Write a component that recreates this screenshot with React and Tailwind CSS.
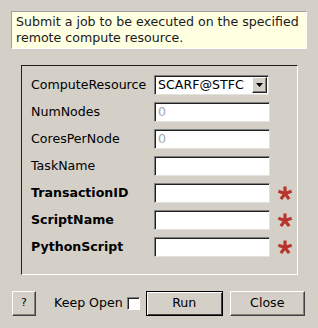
const fields = [
  { label: 'NumNodes', value: '0', disabled: true },
  { label: 'CoresPerNode', value: '0', disabled: true },
  { label: 'TaskName', value: '' },
  { label: 'TransactionID', value: '', required: true },
  { label: 'ScriptName', value: '', required: true },
  { label: 'PythonScript', value: '', required: true },
];

function Asterisk() {
  // five-armed red mark for mandatory fields
  const arms = [-90, -18, 54, 126, 198];
  return (
    <svg width="16" height="16" viewBox="0 0 16 16" className="ml-[7px]">
      {arms.map((a) => {
        const r = (a * Math.PI) / 180;
        return (
          <line
            key={a}
            x1="8"
            y1="8.5"
            x2={8 + Math.cos(r) * 7}
            y2={8.5 + Math.sin(r) * 7}
            stroke="#b8352b"
            strokeWidth="3.2"
            strokeLinecap="butt"
          />
        );
      })}
    </svg>
  );
}

function Field({ value, disabled }) {
  return (
    <div className="w-[116px] h-[20px] bg-white border border-t-[#808080] border-l-[#808080] border-b-[#e4e2dc] border-r-[#e4e2dc] shadow-[inset_1px_1px_0_#202020] flex items-center pl-[3px]">
      <span className={disabled ? 'text-[#a8a8a8]' : 'text-black'}>{value}</span>
    </div>
  );
}

function RaisedButton({ children, className = '', isDefault = false }) {
  return (
    <button
      className={
        'h-[25px] bg-[#d4d0c8] flex items-center justify-center ' +
        (isDefault
          ? 'border border-black shadow-[inset_1px_1px_0_#ffffff,inset_-1px_-1px_0_#404040] '
          : 'border border-t-white border-l-white border-b-[#404040] border-r-[#404040] shadow-[inset_-1px_-1px_0_#808080] ') +
        className
      }
    >
      {children}
    </button>
  );
}

export default function App() {
  return (
    <div className="w-[318px] h-[328px] bg-[#d4d0c8] flex flex-col font-['DejaVu_Sans',sans-serif] text-[12.6px] text-black">
      {/* Description */}
      <div className="mt-[11px] ml-[11px] w-[296px] h-[38px] bg-[#ffffe1] border border-t-[#a0a0a0] border-l-[#a0a0a0] border-b-white border-r-white pl-[4px] pt-[2px] leading-[16px] text-[#1a1a1a] whitespace-nowrap">
        <div>Submit a job to be executed on the specified</div>
        <div>remote compute resource.</div>
      </div>

      {/* Properties group */}
      <div className="mt-[16px] ml-[21px] w-[277px] h-[210px] border border-t-[#202020] border-l-[#202020] border-b-white border-r-white pl-[9px] pt-[9px] flex flex-col gap-[7px]">
        <div className="flex items-center h-[20px]">
          <div className="w-[123px]">ComputeResource</div>
          <div className="w-[115px] h-[20px] bg-white border border-t-[#808080] border-l-[#808080] border-b-[#e4e2dc] border-r-[#e4e2dc] shadow-[inset_1px_1px_0_#202020] flex items-center pl-[3px] pr-[1px]">
            <span className="flex-1">SCARF@STFC</span>
            <div className="w-[15px] h-[16px] bg-[#d4d0c8] border border-t-white border-l-white border-b-[#202020] border-r-[#202020] shadow-[inset_-1px_-1px_0_#808080] flex items-center justify-center">
              <svg width="7" height="4" viewBox="0 0 7 4">
                <path d="M0 0 H7 L3.5 4 Z" fill="#000" />
              </svg>
            </div>
          </div>
        </div>
        {fields.map((f) => (
          <div key={f.label} className="flex items-center h-[20px]">
            <div className={'w-[123px] ' + (f.required ? 'font-bold' : '')}>{f.label}</div>
            <Field value={f.value} disabled={f.disabled} />
            {f.required && <Asterisk />}
          </div>
        ))}
      </div>

      {/* Bottom buttons */}
      <div className="mt-[16px] ml-[12px] flex items-center">
        <RaisedButton className="w-[24px] text-[11px]">?</RaisedButton>
        <span className="ml-[18px]">Keep Open</span>
        <div className="ml-[4px] w-[13px] h-[13px] bg-white border border-t-[#808080] border-l-[#808080] border-b-white border-r-white shadow-[inset_1px_1px_0_#202020]" />
        <RaisedButton isDefault className="ml-[6px] w-[77px]">Run</RaisedButton>
        <RaisedButton className="ml-[7px] w-[75px]">Close</RaisedButton>
      </div>
    </div>
  );
}
